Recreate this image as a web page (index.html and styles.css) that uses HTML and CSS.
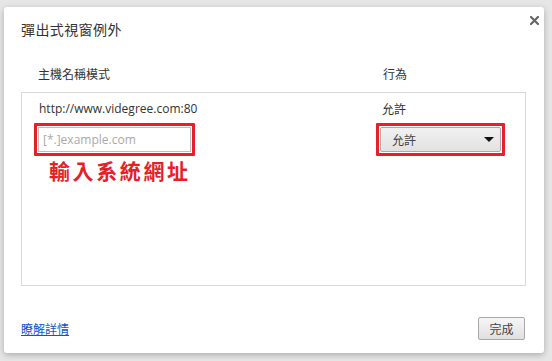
FILE: index.html
```html
<!DOCTYPE html>
<html lang="zh-Hant">
<head>
<meta charset="utf-8">
<link rel="stylesheet" href="styles.css">
</head>
<body>
<div class="dialog">
  <div class="head">
    <h1 class="title">彈出式視窗例外</h1>
    <span class="close"><svg width="9" height="9" viewBox="0 0 9 9"><path d="M1 1L8 8M8 1L1 8" stroke="#666" stroke-width="2.2" stroke-linecap="square"/></svg></span>
  </div>
  <div class="cols">
    <span class="col-host">主機名稱模式</span>
    <span class="col-act">行為</span>
  </div>
  <div class="list">
    <div class="row">
      <span class="host">http://www.videgree.com:80</span>
      <span class="act">允許</span>
    </div>
    <div class="row edit">
      <div class="cell">
        <div class="mark"><div class="input">[*.]example.com</div></div>
        <div class="note">輸入系統網址</div>
      </div>
      <div class="cell">
        <div class="mark"><div class="select"><span>允許</span><span class="arrow"></span></div></div>
      </div>
    </div>
  </div>
  <div class="foot">
    <a class="link" href="#">瞭解詳情</a>
    <button class="btn">完成</button>
  </div>
</div>
</body>
</html>
```
FILE: styles.css
```css
* { box-sizing: border-box; }
html, body { margin: 0; height: 100%; }
body {
  background: #e6e6e6;
  font-family: "Open Sans", "Noto Sans CJK TC", sans-serif;
  color: #333;
  padding: 7px 8px 8px 4px;
}
.dialog {
  width: 540px;
  height: 346px;
  background: #fff;
  border-radius: 3px;
  box-shadow: 0 2px 6px rgba(0,0,0,0.25);
  display: flex;
  flex-direction: column;
  padding: 0 18px 0 17px;
}
.head {
  display: flex;
  justify-content: space-between;
  align-items: flex-start;
  height: 58px;
}
.title {
  margin: 12px 0 0;
  font-family: "Noto Sans CJK TC", sans-serif;
  font-weight: 400;
  font-size: 14px;
  letter-spacing: 0.4px;
  color: #333;
}
.close { margin: 9px -13px 0 0; display: flex; }
.cols {
  display: flex;
  font-family: "Noto Sans CJK TC", sans-serif;
  font-size: 12px;
  height: 27px;
  line-height: 18px;
}
.col-host { width: 362px; padding-left: 17px; }
.list {
  height: 194px;
  border: 1px solid #d9d9d9;
  padding: 6px 0 0 12px;
}
.row { display: flex; }
.row > :first-child { width: 342px; }
.host {
  font-size: 12px;
  padding-left: 5px;
  line-height: 20px;
}
.act {
  font-family: "Noto Sans CJK TC", sans-serif;
  font-size: 12px;
  padding-left: 6px;
  line-height: 20px;
}
.edit { margin-top: 4px; }
.mark {
  display: inline-block;
  border: 3px solid #e61f2b;
  padding: 1px;
  border-radius: 1px;
}
.input {
  width: 153px;
  height: 25px;
  border: 1px solid #bdbdbd;
  font-size: 12px;
  color: #a9a9a9;
  line-height: 23px;
  padding-left: 4px;
}
.select {
  width: 121px;
  height: 25px;
  border: 1px solid #aaa;
  border-radius: 2px;
  background: linear-gradient(#f1f1f1, #e2e2e2);
  display: flex;
  align-items: center;
  justify-content: space-between;
  padding: 0 6px 0 11px;
  font-family: "Noto Sans CJK TC", sans-serif;
  font-size: 12px;
  color: #444;
}
.arrow {
  width: 0; height: 0;
  border-left: 5px solid transparent;
  border-right: 5px solid transparent;
  border-top: 5px solid #111;
}
.note {
  font-family: "Noto Sans CJK TC", sans-serif;
  font-size: 21px;
  font-weight: 700;
  letter-spacing: 2.6px;
  color: #e61f2b;
  padding-left: 15px;
  line-height: 28px;
}
.foot {
  display: flex;
  justify-content: space-between;
  align-items: center;
  margin-top: 31px;
}
.link {
  font-family: "Noto Sans CJK TC", sans-serif;
  font-size: 12px;
  color: #1155cc;
  text-decoration: underline;
}
.btn {
  width: 47px;
  height: 23px;
  margin-right: 1px;
  border: 1px solid #a8a8a8;
  border-radius: 2px;
  background: linear-gradient(#f6f6f6, #e0e0e0);
  font-family: "Noto Sans CJK TC", sans-serif;
  font-size: 12px;
  color: #444;
  padding: 0;
}
```
